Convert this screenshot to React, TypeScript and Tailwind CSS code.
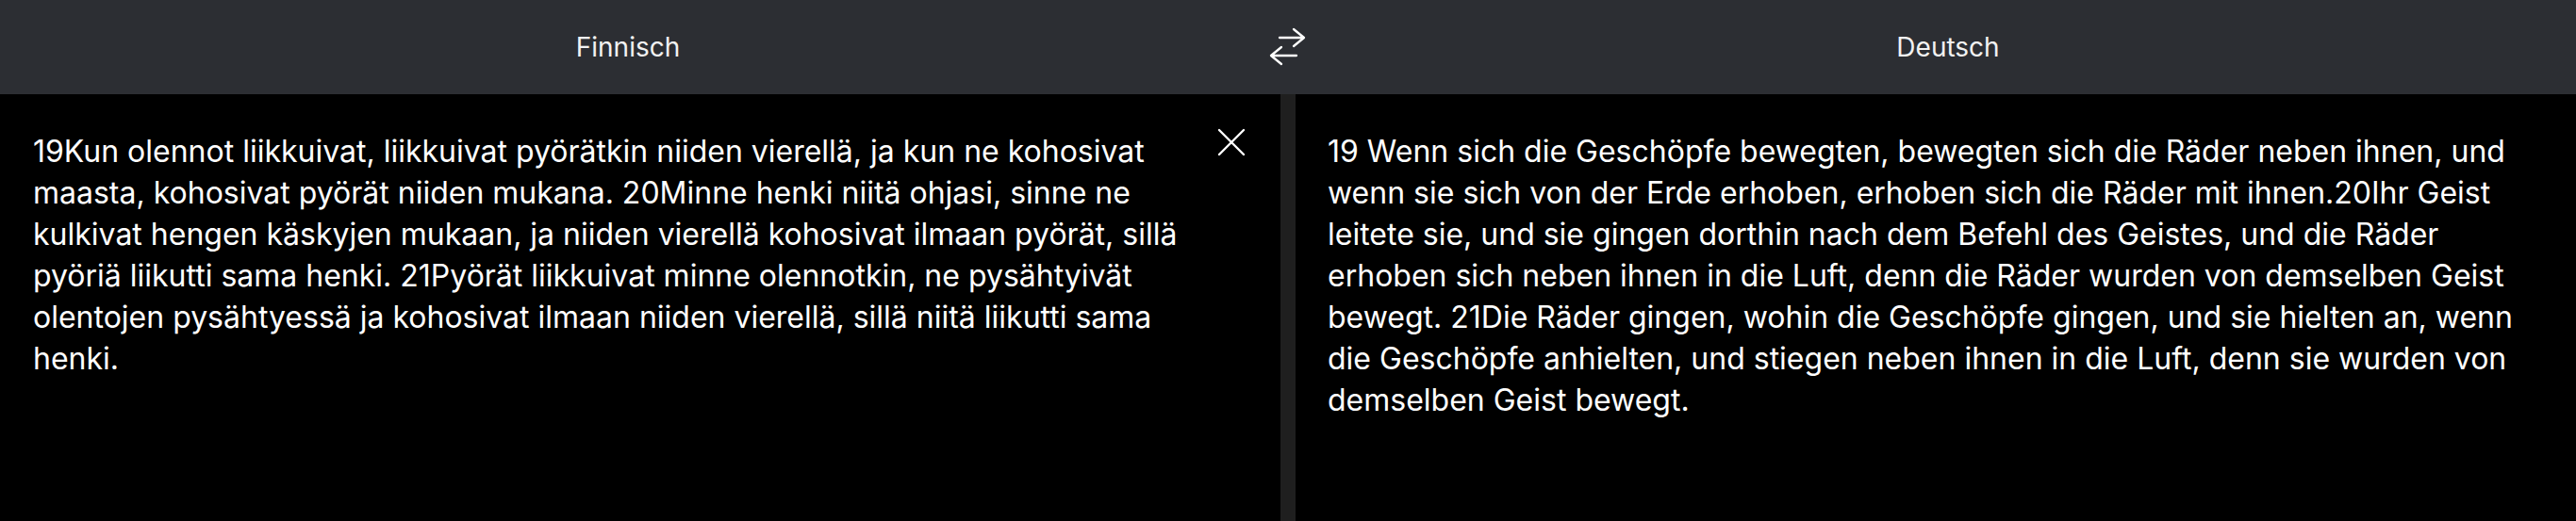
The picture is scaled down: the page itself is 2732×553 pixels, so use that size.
const fi =
  "19Kun olennot liikkuivat, liikkuivat pyörätkin niiden vierellä, ja kun ne kohosivat maasta, kohosivat pyörät niiden mukana. 20Minne henki niitä ohjasi, sinne ne kulkivat hengen käskyjen mukaan, ja niiden vierellä kohosivat ilmaan pyörät, sillä pyöriä liikutti sama henki. 21Pyörät liikkuivat minne olennotkin, ne pysähtyivät olentojen pysähtyessä ja kohosivat ilmaan niiden vierellä, sillä niitä liikutti sama henki.";

const de =
  "19 Wenn sich die Geschöpfe bewegten, bewegten sich die Räder neben ihnen, und wenn sie sich von der Erde erhoben, erhoben sich die Räder mit ihnen.20Ihr Geist leitete sie, und sie gingen dorthin nach dem Befehl des Geistes, und die Räder erhoben sich neben ihnen in die Luft, denn die Räder wurden von demselben Geist bewegt. 21Die Räder gingen, wohin die Geschöpfe gingen, und sie hielten an, wenn die Geschöpfe anhielten, und stiegen neben ihnen in die Luft, denn sie wurden von demselben Geist bewegt.";

function SwapIcon() {
  return (
    <svg width="40" height="42" viewBox="0 0 40 42" fill="none" stroke="white" strokeWidth="2.3" strokeLinecap="round" strokeLinejoin="round">
      <path d="M11 11H37M26 2L37 11L26 20" />
      <path d="M29 30H2M13 21L2 30L13 39" />
    </svg>
  );
}

function CloseIcon() {
  return (
    <svg width="30" height="30" viewBox="0 0 30 30" fill="none" stroke="white" strokeWidth="2.4" strokeLinecap="round">
      <path d="M2 2L28 28M28 2L2 28" />
    </svg>
  );
}

export default function App() {
  return (
    <div className="flex h-[553px] w-[2732px] flex-col overflow-hidden bg-black font-['Inter',sans-serif] text-white">
      <header className="grid h-[100px] shrink-0 grid-cols-[1fr_68px_1fr] items-center bg-[#2c2e33]">
        <div className="text-center text-[28px] text-[#f2f2f2]">Finnisch</div>
        <button className="flex justify-center">
          <SwapIcon />
        </button>
        <div className="text-center text-[28px] text-[#f2f2f2]">Deutsch</div>
      </header>
      <main className="grid flex-1 grid-cols-[1fr_16px_1fr]">
        <section className="relative pl-[35px] pr-[88px] pt-[39px]">
          <p className="text-[32px] leading-[44px]">{fi}</p>
          <button className="absolute right-[37px] top-[36px]">
            <CloseIcon />
          </button>
        </section>
        <div className="bg-[#1f1f1f]" />
        <section className="px-[34px] pt-[39px]">
          <p className="text-[32px] leading-[44px]">{de}</p>
        </section>
      </main>
    </div>
  );
}
